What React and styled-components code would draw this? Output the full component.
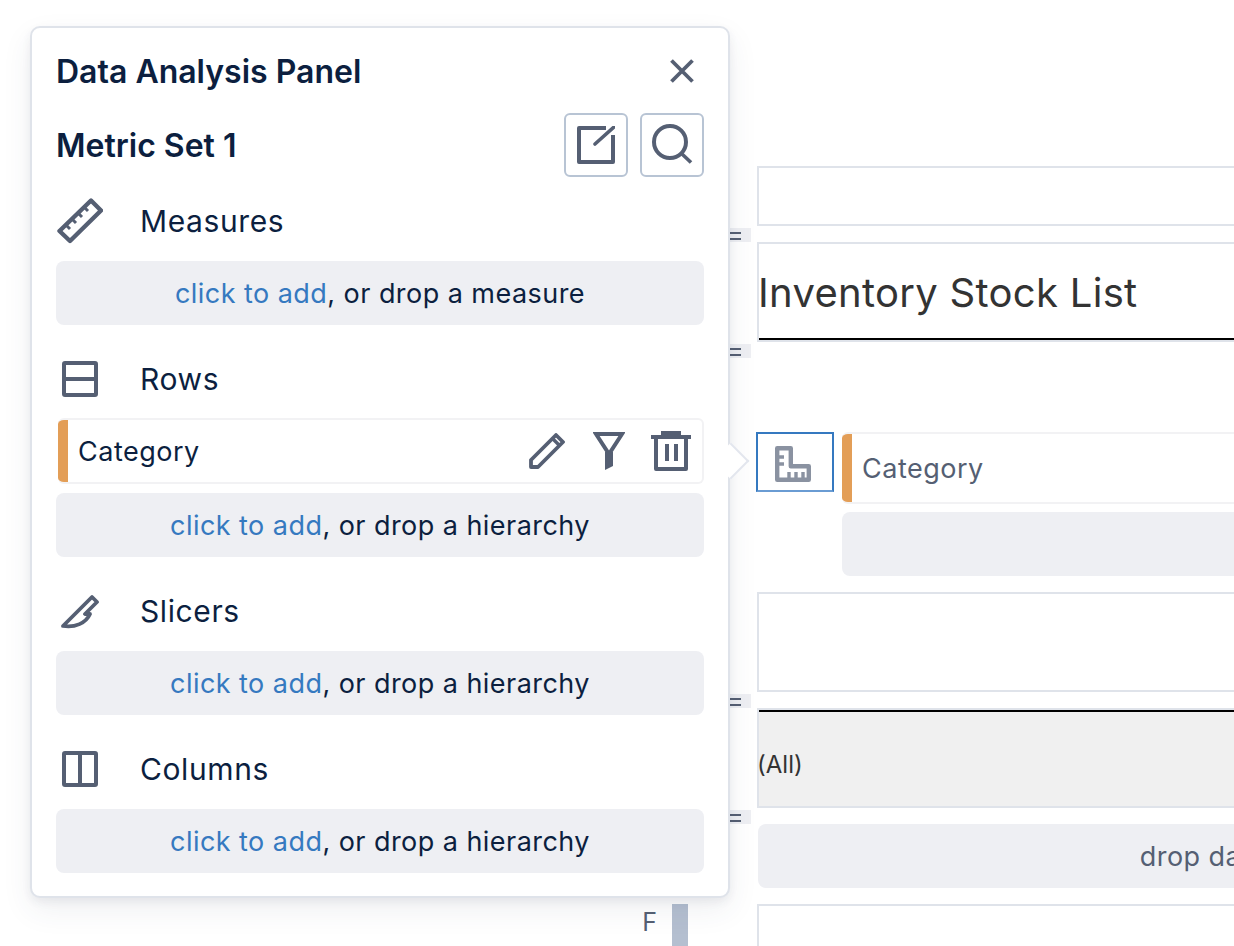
import React from "react";
import styled, { createGlobalStyle } from "styled-components";

const GlobalStyle = createGlobalStyle`
  html, body {
    margin: 0;
    padding: 0;
    background: #fff;
    font-family: Inter, "Liberation Sans", sans-serif;
    font-optical-sizing: none;
  }
  * {
    box-sizing: border-box;
  }
`;

const Icon = ({ w, h, children }) => (
  <svg width={w} height={h} viewBox={`0 0 ${w} ${h}`} fill="none" stroke="#555f73" strokeWidth="4">
    {children}
  </svg>
);

const CloseIcon = () => (
  <Icon w={24} h={24}>
    <path d="M1.5 1.5L22.5 22.5M22.5 1.5L1.5 22.5" strokeWidth="3.8" />
  </Icon>
);

const EditIcon = () => (
  <Icon w={38} h={38}>
    <path d="M29 2H2V36H36V9" strokeLinejoin="round" />
    <path d="M18 18L37 1" strokeWidth="3.6" strokeLinecap="round" />
  </Icon>
);

const SearchIcon = () => (
  <Icon w={42} h={42}>
    <circle cx="19" cy="18" r="16" />
    <path d="M31 30L40 38.5" strokeWidth="3.6" />
  </Icon>
);

const RulerIcon = () => (
  <Icon w={46} h={46}>
    <path d="M34 2.5L44 12.5L13 43L2.5 33Z" strokeLinejoin="round" strokeWidth="4.4" />
    <path d="M9 27L13 31M15 21L19 25M21 15L25 19M27 9L31 13" strokeWidth="3" />
  </Icon>
);

const RowsIcon = () => (
  <Icon w={36} h={36}>
    <rect x="2" y="2" width="32" height="32" rx="1" />
    <path d="M2 18H34" />
  </Icon>
);

const ColumnsIcon = () => (
  <Icon w={36} h={36}>
    <rect x="2" y="2" width="32" height="32" rx="1" />
    <path d="M18 2V34" />
  </Icon>
);

const KnifeIcon = () => (
  <Icon w={40} h={36}>
    <path
      d="M3 33L32 4L37 9L25 21H30C26 30 15 35 3 33Z"
      strokeWidth="3.8"
      strokeLinejoin="round"
    />
  </Icon>
);

const PencilIcon = () => (
  <Icon w={36} h={36}>
    <path
      d="M2 34V27L27 2L34 9L9 34Z"
      strokeWidth="3.8"
      strokeLinejoin="round"
    />
    <path d="M24 6L30 12" strokeWidth="3.4" />
  </Icon>
);

const FilterIcon = () => (
  <Icon w={32} h={38}>
    <path d="M3 2H29L16 22Z" strokeWidth="4" />
    <path d="M12 20H20V34L12 38Z" fill="#555f73" stroke="none" />
  </Icon>
);

const TrashIcon = () => (
  <Icon w={40} h={40}>
    <path d="M0 6H40" />
    <path d="M10 2H30" />
    <path d="M6 6V38H36V6" transform="translate(-1 0)" strokeLinejoin="round" />
    <path d="M16 13V30M25 13V30" />
  </Icon>
);

const SetSquareIcon = () => (
  <svg width="36" height="36" viewBox="0 0 36 36" fill="none" stroke="#8a92a1" strokeWidth="4.4">
    <path d="M2.2 2.2H15.8V20.2H33.8V33.8H2.2Z" strokeLinejoin="round" />
    <path d="M4 11H9M4 18H9M14 32V26M21 32V26M28 32V26" strokeWidth="3.4" />
  </svg>
);

const Stage = styled.div`
  position: relative;
  display: flex;
  width: 1234px;
  height: 946px;
  overflow: hidden;
  background: #fff;
`;

const Rail = styled.div`
  flex: 0 0 757px;
  padding: 904px 69px 0 0;
  display: flex;
  justify-content: flex-end;
  gap: 15px;
`;

const RailLetter = styled.span`
  font-size: 25px;
  line-height: 36px;
  color: #555f73;
`;

const RailBar = styled.div`
  width: 16px;
  height: 60px;
  background: #b4bfd0;
`;

const Canvas = styled.div`
  flex: 0 0 958px;
  padding-top: 166px;
`;

const Frame = styled.div`
  position: relative;
  height: ${(props) => props.$height}px;
  border: 2px solid #dfe3ea;
  background: ${(props) => (props.$shaded ? "#f0f0f0" : "#fff")};
  display: flex;
  align-items: center;
`;

const TitleFrame = styled(Frame)`
  &::after {
    content: "";
    position: absolute;
    left: 0;
    right: 0;
    bottom: 0;
    height: 2px;
    background: #000;
  }
`;

const FilterFrame = styled(Frame)`
  padding-top: 12px;

  &::before {
    content: "";
    position: absolute;
    left: 0;
    right: 0;
    top: 0;
    height: 2px;
    background: #000;
  }
`;

const PageTitle = styled.h1`
  margin: 0 0 0 -1px;
  font-size: 40px;
  font-weight: 400;
  letter-spacing: 0.3px;
  color: #333;
`;

const AllLabel = styled.span`
  margin-left: -2px;
  font-size: 24px;
  color: #333;
`;

const Gutter = styled.div`
  position: relative;
  height: ${(props) => props.$height || 16}px;
`;

const Handle = styled.div`
  position: absolute;
  top: 2px;
  left: -42px;
  width: 36px;
  height: 14px;
  background: #eeeff3;
  padding: 4px 10px 0 15px;

  &::before,
  &::after {
    content: "";
    display: block;
    height: 2px;
    background: #555f73;
  }
  &::after {
    margin-top: 4px;
  }
`;

const EditorRow = styled.div`
  display: flex;
  gap: 8px;
  margin-left: -1px;
`;

const IconSlot = styled.div`
  flex: 0 0 78px;
  height: 60px;
  border: 2px solid #3579c0;
  border-bottom-color: #6a9cd3;
  display: flex;
  align-items: center;
  justify-content: center;
  padding: 4px 4px 0 0;
`;

const EditorColumn = styled.div`
  flex: 1;
`;

const Chip = styled.div`
  display: flex;
  align-items: center;
  height: ${(props) => props.$height}px;
  margin-left: ${(props) => props.$left}px;
  border: 2px solid #f2f2f4;
  border-left: 0;
  border-radius: 6px;
  overflow: hidden;
  font-size: 27px;
  letter-spacing: 0.5px;
  color: ${(props) => props.$color};
`;

const ChipStripe = styled.span`
  flex: 0 0 10px;
  margin-top: -2px;
  margin-bottom: -2px;
  align-self: stretch;
  background: #e39e57;
`;

const ChipLabel = styled.span`
  flex: 1;
  padding-left: 10px;
`;

const ChipActions = styled.div`
  display: flex;
  align-items: center;
  gap: 26px;
  padding-right: 11px;
`;

const PencilSlot = styled.span`
  display: flex;
  margin-right: 2px;
`;

const DropZone = styled.div`
  height: 64px;
  border-radius: 8px;
  background: #eeeff3;
  display: flex;
  align-items: center;
  justify-content: center;
  font-size: 27px;
  letter-spacing: 0.45px;
  color: #0c1f3f;
  white-space: pre;
`;

const CanvasDrop = styled(DropZone)`
  color: #555f73;
  margin-top: ${(props) => props.$top || 0}px;
  margin-left: ${(props) => props.$left || 0}px;
`;

const AddLink = styled.span`
  color: #3579c0;
`;

const Panel = styled.section`
  position: absolute;
  left: 30px;
  top: 26px;
  width: 700px;
  height: 872px;
  padding: 22px 24px 0;
  background: #fff;
  border: 2px solid #dfe3ea;
  border-radius: 10px;
  box-shadow: 0 4px 8px rgba(50, 60, 90, 0.07), 0 12px 30px rgba(50, 60, 90, 0.08);
  color: #0c1f3f;
`;

const Pointer = styled.span`
  position: absolute;
  top: 420px;
  right: -16px;
  width: 26px;
  height: 26px;
  background: #fff;
  border: solid #e3e6ee;
  border-width: 2px 2px 0 0;
  transform: rotate(45deg);
`;

const HeaderRow = styled.div`
  display: flex;
  align-items: center;
  justify-content: space-between;
`;

const PanelTitle = styled.h2`
  margin: 0;
  font-size: 32px;
  line-height: 44px;
  font-weight: 600;
`;

const MetricTitle = styled(PanelTitle)`
  padding-top: 2px;
`;

const CloseButton = styled.button`
  display: flex;
  padding: 0;
  margin: -2px 10px 0 0;
  border: 0;
  background: none;
`;

const MetricRow = styled(HeaderRow)`
  margin-top: 19px;
  margin-bottom: 24px;
`;

const ToolGroup = styled.div`
  display: flex;
  gap: 12px;
`;

const ToolButton = styled.button`
  width: 64px;
  height: 64px;
  padding: 0;
  display: flex;
  align-items: center;
  justify-content: center;
  background: #fff;
  border: 2px solid #b8c4d4;
  border-radius: 6px;
`;

const Section = styled.div`
  margin-bottom: 34px;
`;

const SectionHead = styled.div`
  display: flex;
  align-items: center;
  height: 40px;
  margin-bottom: 20px;
`;

const SectionIcon = styled.div`
  flex: 0 0 84px;
  display: flex;
  padding-left: ${(props) => props.$inset || 0}px;
`;

const SectionName = styled.span`
  font-size: 30px;
  letter-spacing: 0.6px;
`;

const FieldChip = styled(Chip)`
  margin-top: -1px;
  margin-bottom: 9px;
`;

const drop = (noun) => (
  <DropZone>
    <AddLink>click to add</AddLink>, or drop a {noun}
  </DropZone>
);

const sections = [
  { name: "Rows", icon: <RowsIcon />, inset: 6, noun: "hierarchy", chip: true },
  { name: "Slicers", icon: <KnifeIcon />, inset: 4, noun: "hierarchy" },
  { name: "Columns", icon: <ColumnsIcon />, inset: 6, noun: "hierarchy" },
];

export default function App() {
  return (
    <Stage>
      <GlobalStyle />
      <Rail>
        <RailLetter>F</RailLetter>
        <RailBar />
      </Rail>

      <Canvas>
        <Frame $height={60} />
        <Gutter>
          <Handle />
        </Gutter>
        <TitleFrame $height={100}>
          <PageTitle>Inventory Stock List</PageTitle>
        </TitleFrame>
        <Gutter $height={90}>
          <Handle />
        </Gutter>
        <EditorRow>
          <IconSlot>
            <SetSquareIcon />
          </IconSlot>
          <EditorColumn>
            <Chip $height={72} $left={0} $color="#555f73">
              <ChipStripe />
              <ChipLabel>Category</ChipLabel>
            </Chip>
            <CanvasDrop $top={8} />
          </EditorColumn>
        </EditorRow>
        <Gutter />
        <Frame $height={100} />
        <Gutter>
          <Handle />
        </Gutter>
        <FilterFrame $height={100} $shaded>
          <AllLabel>(All)</AllLabel>
        </FilterFrame>
        <Gutter>
          <Handle />
        </Gutter>
        <CanvasDrop $left={1}>drop data here</CanvasDrop>
        <Gutter />
        <Frame $height={60} />
      </Canvas>

      <Panel>
        <Pointer />
        <HeaderRow>
          <PanelTitle>Data Analysis Panel</PanelTitle>
          <CloseButton>
            <CloseIcon />
          </CloseButton>
        </HeaderRow>
        <MetricRow>
          <MetricTitle>Metric Set 1</MetricTitle>
          <ToolGroup>
            <ToolButton>
              <EditIcon />
            </ToolButton>
            <ToolButton>
              <SearchIcon />
            </ToolButton>
          </ToolGroup>
        </MetricRow>

        <Section>
          <SectionHead>
            <SectionIcon $inset={1}>
              <RulerIcon />
            </SectionIcon>
            <SectionName>Measures</SectionName>
          </SectionHead>
          {drop("measure")}
        </Section>

        {sections.map((section) => (
          <Section key={section.name}>
            <SectionHead>
              <SectionIcon $inset={section.inset}>{section.icon}</SectionIcon>
              <SectionName>{section.name}</SectionName>
            </SectionHead>
            {section.chip && (
              <FieldChip $height={66} $left={2} $color="#0c1f3f">
                <ChipStripe />
                <ChipLabel>Category</ChipLabel>
                <ChipActions>
                  <PencilSlot>
                    <PencilIcon />
                  </PencilSlot>
                  <FilterIcon />
                  <TrashIcon />
                </ChipActions>
              </FieldChip>
            )}
            {drop(section.noun)}
          </Section>
        ))}
      </Panel>
    </Stage>
  );
}
